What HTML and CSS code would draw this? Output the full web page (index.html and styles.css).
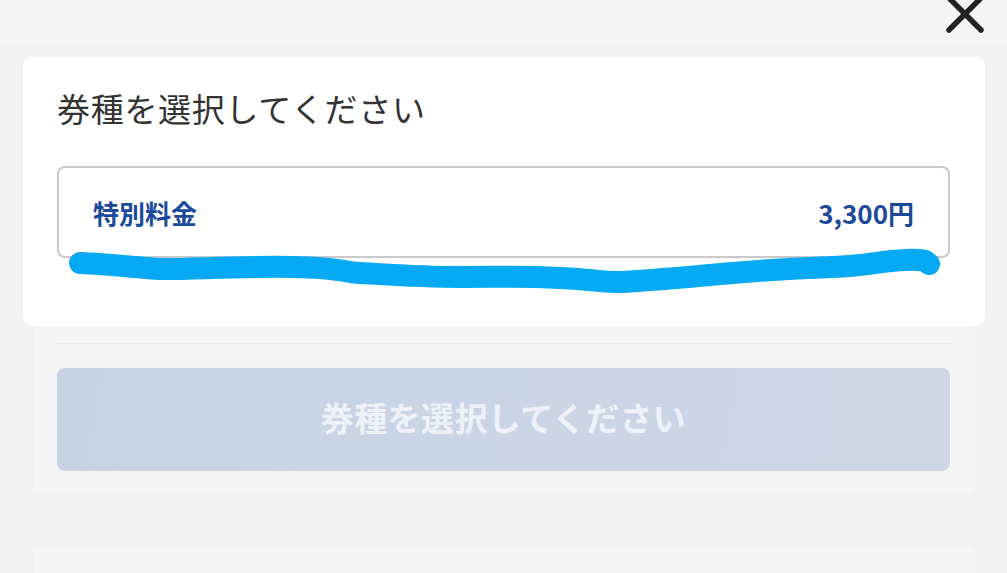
FILE: index.html
```html
<!DOCTYPE html>
<html lang="ja">
<head>
<meta charset="utf-8">
<link rel="stylesheet" href="styles.css">
</head>
<body>
<div class="page">
  <header class="topbar">
    <button class="close" aria-label="閉じる">
      <svg width="44" height="36" viewBox="0 0 44 36">
        <path d="M6 -2 L38 30 M38 -2 L6 30" stroke="#222" stroke-width="5.5" stroke-linecap="round" fill="none"/>
      </svg>
    </button>
  </header>
  <section class="card">
    <h2 class="title">券種を選択してください</h2>
    <div class="option">
      <span class="opt-name">特別料金</span>
      <span class="opt-price">3,300円</span>
    </div>
    <svg class="scribble" width="900" height="60" viewBox="60 240 900 60">
      <path d="M80 263 C 110 264, 140 268, 160 269 S 240 266, 293 267 S 340 272, 360 273 S 420 277, 460 277 S 520 276, 560 278 S 600 282, 617 282 S 700 276, 733 273 S 800 268, 833 267 S 880 261, 905 260 S 925 262, 929 264" stroke="#05a9f4" stroke-width="22" stroke-linecap="round" stroke-linejoin="round" fill="none"/>
    </svg>
  </section>
  <section class="panel">
    <div class="divider"></div>
    <button class="submit" disabled>券種を選択してください</button>
  </section>
  <div class="gap"></div>
  <section class="panel panel-next"></section>
</div>
</body>
</html>
```

FILE: styles.css
```css
html, body {
  margin: 0;
  padding: 0;
}
body {
  background: #f2f2f2;
  font-family: "Noto Sans CJK JP", "Noto Sans", sans-serif;
  width: 1007px;
  height: 573px;
  overflow: hidden;
}
.page {
  display: flex;
  flex-direction: column;
}
.topbar {
  height: 57px;
  background: linear-gradient(#f5f5f5 0, #f5f5f5 45px, #f2f2f2 47px);
  display: flex;
  justify-content: flex-end;
  align-items: flex-start;
  padding-right: 20px;
  box-sizing: border-box;
}
.close {
  border: 0;
  background: none;
  padding: 0;
  margin: 0;
  width: 44px;
  height: 36px;
  display: block;
}
.close svg {
  display: block;
}
.card {
  position: relative;
  margin-left: 23px;
  width: 962px;
  height: 269px;
  box-sizing: border-box;
  background: #fff;
  border-radius: 10px;
  padding: 29px 35px 0 34px;
}
.title {
  margin: 0;
  font-size: 33px;
  line-height: 44px;
  font-weight: 400;
  color: #333;
  letter-spacing: 0.7px;
}
.option {
  margin-top: 36px;
  height: 92px;
  box-sizing: border-box;
  border: 2px solid #c9c9c9;
  border-radius: 8px;
  display: flex;
  justify-content: space-between;
  align-items: center;
  padding: 0 34px 0 34px;
  color: #1b4a9b;
  font-weight: 700;
  font-size: 26px;
}
.scribble {
  position: absolute;
  left: 37px;
  top: 183px;
}
.panel {
  margin-left: 34px;
  width: 939px;
  box-sizing: border-box;
  background: #f5f5f5;
  padding: 17px 23px 22px;
}
.divider {
  height: 1px;
  background: #e9e9e9;
}
.submit {
  margin-top: 24px;
  width: 100%;
  height: 103px;
  border: 0;
  border-radius: 8px;
  background: linear-gradient(100deg, #c7d2e5, #cdd7e8);
  color: #eef1f7;
  font-family: "Noto Sans CJK JP", "Noto Sans", sans-serif;
  font-size: 33px;
  font-weight: 700;
  letter-spacing: 0.4px;
  padding: 0 0 6px;
  display: block;
}
.gap {
  height: 55px;
}
.panel-next {
  height: 40px;
  padding: 0;
}
```
